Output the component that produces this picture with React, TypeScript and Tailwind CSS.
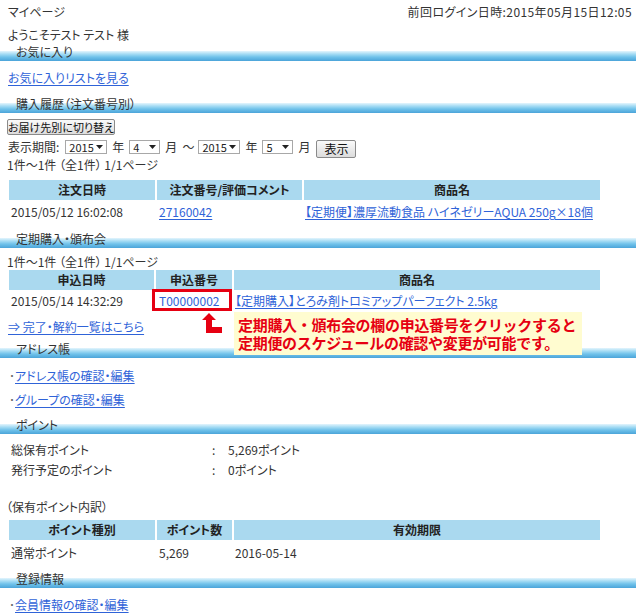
import React from "react";

const linkCls = "text-[#2f63d8] underline underline-offset-[2px]";

function SectionHead({ title, className = "" }: { title: string; className?: string }) {
  return (
    <div
      className={
        "h-[20px] pl-[16px] leading-[16px] text-[12px] text-[#333] bg-[linear-gradient(to_bottom,transparent_7px,#e4f5fd_7px,#a6dcf4_10px,#70c2ea_13px,#4ba4d9_17px,transparent_17px)] " +
        className
      }
    >
      {title}
    </div>
  );
}

function Sel({ value, className }: { value: string; className: string }) {
  return (
    <div
      className={
        "flex h-[14px] items-center justify-between border border-[#a8a8a8] bg-white pl-[3px] pr-[3px] text-[11px] leading-[11px] text-[#222] " +
        className
      }
    >
      <span>{value}</span>
      <svg width="7" height="4" viewBox="0 0 7 4">
        <polygon points="0,0 7,0 3.5,4" fill="#222" />
      </svg>
    </div>
  );
}

const thCls = "h-[20px] bg-[#aad9ef] p-0 text-center text-[12px] font-bold text-[#222]";

export default function App() {
  return (
    <div className="relative w-[636px] bg-white font-['Noto_Sans_CJK_JP','Liberation_Sans',sans-serif] text-[12px] text-[#333] [font-feature-settings:'palt']">
      {/* top line */}
      <div className="flex h-[24px] items-center justify-between pl-[8px] pr-[4px]">
        <span>マイページ</span>
        <span className="tracking-[0.4px]">前回ログイン日時:2015年05月15日12:05</span>
      </div>
      <div className="h-[20px] pl-[8px] leading-[22px]">ようこそテスト テスト 様</div>

      <SectionHead title="お気に入り" />
      <div className="h-[32px] pl-[8px] pt-[6px] leading-[16px]">
        <a className={linkCls}>お気に入りリストを見る</a>
      </div>

      {/* purchase history */}
      <SectionHead title="購入履歴（注文番号別）" />
      <div className="mt-[2px] pl-[7px]">
        <button className="h-[16px] w-[108px] rounded-[2px] border border-[#8a8a8a] bg-[linear-gradient(to_bottom,#fafafa,#dcdcdc)] text-[11px] leading-[14px] text-[#111]">
          お届け先別に切り替え
        </button>
      </div>
      <div className="mt-[2px] flex h-[18px] items-center pl-[8px] text-[12px]">
        <span>表示期間:</span>
        <Sel value="2015" className="ml-[6px] w-[42px]" />
        <span className="ml-[5px]">年</span>
        <Sel value="4" className="ml-[5px] w-[31px]" />
        <span className="ml-[5px]">月</span>
        <span className="ml-[5px]">〜</span>
        <Sel value="2015" className="ml-[4px] w-[42px]" />
        <span className="ml-[5px]">年</span>
        <Sel value="5" className="ml-[5px] w-[31px]" />
        <span className="ml-[5px]">月</span>
        <button className="ml-[6px] mt-[3px] h-[18px] w-[40px] rounded-[2px] border border-[#8a8a8a] bg-[linear-gradient(to_bottom,#fafafa,#dcdcdc)] text-[12px] leading-[14px] text-[#111]">
          表示
        </button>
      </div>
      <div className="h-[17px] pl-[7px] leading-[17px]">1件〜1件 （全1件） 1/1ページ</div>

      <table className="ml-[7px] mt-[7px] table-fixed border-separate border-spacing-x-[2px] border-spacing-y-0">
        <thead>
          <tr>
            <th className={thCls + " w-[146px]"}>注文日時</th>
            <th className={thCls + " w-[145px]"}>注文番号/評価コメント</th>
            <th className={thCls + " w-[296px]"}>商品名</th>
          </tr>
        </thead>
        <tbody>
          <tr className="h-[24px]">
            <td className="p-0 pl-[2px] whitespace-nowrap">2015/05/12 16:02:08</td>
            <td className="p-0 pl-[2px]">
              <a className={linkCls}>27160042</a>
            </td>
            <td className="p-0 pl-[1px] whitespace-nowrap">
              <a className={linkCls}>【定期便】濃厚流動食品 ハイネゼリーAQUA 250g×18個</a>
            </td>
          </tr>
        </tbody>
      </table>

      {/* subscriptions */}
      <SectionHead title="定期購入・頒布会" className="mt-[7px]" />
      <div className="h-[19px] pl-[7px] leading-[22px]">1件〜1件 （全1件） 1/1ページ</div>
      <table className="ml-[7px] table-fixed border-separate border-spacing-x-[2px] border-spacing-y-0">
        <thead>
          <tr>
            <th className={thCls + " w-[145px]"}>申込日時</th>
            <th className={thCls + " w-[76px]"}>申込番号</th>
            <th className={thCls + " w-[366px]"}>商品名</th>
          </tr>
        </thead>
        <tbody>
          <tr className="h-[22px]">
            <td className="p-0 pl-[2px] whitespace-nowrap">2015/05/14 14:32:29</td>
            <td className="p-0 pl-[3px]">
              <a className={linkCls}>T00000002</a>
            </td>
            <td className="p-0 pl-[1px] whitespace-nowrap">
              <a className={linkCls}>【定期購入】とろみ剤トロミアップパーフェクト 2.5kg</a>
            </td>
          </tr>
        </tbody>
      </table>
      <div className="h-[29px] pl-[8px] leading-[30px]">
        <a className={linkCls}>⇒ 完了・解約一覧はこちら</a>
      </div>

      {/* address book */}
      <SectionHead title="アドレス帳" />
      <div className="mt-[3px] h-[24px] pl-[9px] leading-[24px]">
        <span className="text-[#666]">･</span>
        <a className={linkCls}>アドレス帳の確認・編集</a>
      </div>
      <div className="h-[24px] pl-[9px] leading-[24px]">
        <span className="text-[#666]">･</span>
        <a className={linkCls}>グループの確認・編集</a>
      </div>

      {/* points */}
      <SectionHead title="ポイント" className="mt-[5px]" />
      <div className="mt-[3px] flex h-[20px] items-center pl-[11px]">
        <span className="w-[201px]">総保有ポイント</span>
        <span className="w-[16px]">:</span>
        <span>5,269ポイント</span>
      </div>
      <div className="flex h-[20px] items-center pl-[11px]">
        <span className="w-[201px]">発行予定のポイント</span>
        <span className="w-[16px]">:</span>
        <span>0ポイント</span>
      </div>
      <div className="mt-[17px] h-[20px] pl-[6px] leading-[20px]">（保有ポイント内訳）</div>
      <table className="ml-[7px] mt-[3px] table-fixed border-separate border-spacing-x-[2px] border-spacing-y-0">
        <thead>
          <tr>
            <th className={thCls + " w-[146px]"}>ポイント種別</th>
            <th className={thCls + " w-[75px]"}>ポイント数</th>
            <th className={thCls + " w-[366px]"}>有効期限</th>
          </tr>
        </thead>
        <tbody>
          <tr className="h-[26px]">
            <td className="p-0 pl-[2px]">通常ポイント</td>
            <td className="p-0 pl-[2px]">5,269</td>
            <td className="p-0 pl-[1px]">2016-05-14</td>
          </tr>
        </tbody>
      </table>

      {/* member info */}
      <SectionHead title="登録情報" className="mt-[5px]" />
      <div className="mt-[2px] h-[24px] pl-[9px] leading-[24px]">
        <span className="text-[#666]">･</span>
        <a className={linkCls}>会員情報の確認・編集</a>
      </div>

      {/* annotation overlay */}
      <div className="absolute left-[152px] top-[289px] h-[22px] w-[80px] border-[3px] border-[#e60012]" />
      <svg className="absolute left-[202px] top-[313px]" width="20" height="20" viewBox="0 0 20 20">
        <polygon points="7,0 14,7 10,7 10,14 20,14 20,20 4,20 4,7 0,7" fill="#e60012" />
      </svg>
      <div className="absolute left-[234px] top-[312px] h-[43px] w-[348px] bg-[#fffcd0] pl-[4px] pt-[4px] text-[15px] font-bold leading-[18px] tracking-[-0.3px] text-[#e60012] [font-feature-settings:normal]">
        <div>定期購入・頒布会の欄の申込番号をクリックすると</div>
        <div>定期便のスケジュールの確認や変更が可能です。</div>
      </div>
    </div>
  );
}
